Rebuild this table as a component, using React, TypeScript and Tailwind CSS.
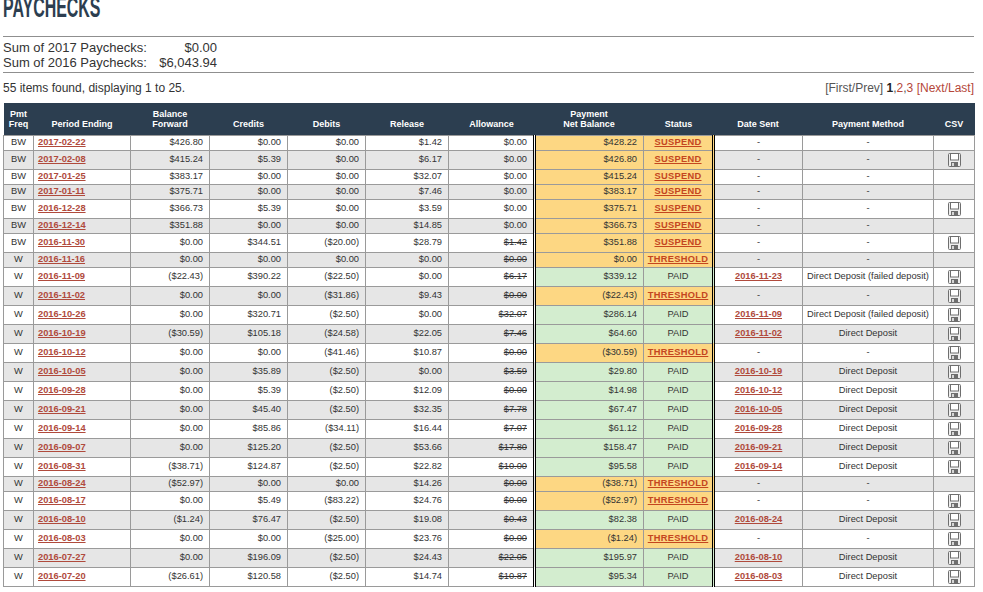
import React from 'react';

type Row = {
  freq: string;
  period: string;
  balance: string;
  credits: string;
  debits: string;
  release: string;
  allowance: string;
  struck: boolean;
  net: string;
  status: 'SUSPEND' | 'THRESHOLD' | 'PAID';
  sent: string;
  method: string;
  csv: boolean;
};

const r = (
  freq: string,
  period: string,
  balance: string,
  credits: string,
  debits: string,
  release: string,
  allowance: string,
  struck: boolean,
  net: string,
  status: Row['status'],
  sent: string,
  method: string,
  csv: boolean
): Row => ({ freq, period, balance, credits, debits, release, allowance, struck, net, status, sent, method, csv });

const DD = 'Direct Deposit';
const DDF = 'Direct Deposit (failed deposit)';

const rows: Row[] = [
  r('BW', '2017-02-22', '$426.80', '$0.00', '$0.00', '$1.42', '$0.00', false, '$428.22', 'SUSPEND', '-', '-', false),
  r('BW', '2017-02-08', '$415.24', '$5.39', '$0.00', '$6.17', '$0.00', false, '$426.80', 'SUSPEND', '-', '-', true),
  r('BW', '2017-01-25', '$383.17', '$0.00', '$0.00', '$32.07', '$0.00', false, '$415.24', 'SUSPEND', '-', '-', false),
  r('BW', '2017-01-11', '$375.71', '$0.00', '$0.00', '$7.46', '$0.00', false, '$383.17', 'SUSPEND', '-', '-', false),
  r('BW', '2016-12-28', '$366.73', '$5.39', '$0.00', '$3.59', '$0.00', false, '$375.71', 'SUSPEND', '-', '-', true),
  r('BW', '2016-12-14', '$351.88', '$0.00', '$0.00', '$14.85', '$0.00', false, '$366.73', 'SUSPEND', '-', '-', false),
  r('BW', '2016-11-30', '$0.00', '$344.51', '($20.00)', '$28.79', '$1.42', true, '$351.88', 'SUSPEND', '-', '-', true),
  r('W', '2016-11-16', '$0.00', '$0.00', '$0.00', '$0.00', '$0.00', true, '$0.00', 'THRESHOLD', '-', '-', false),
  r('W', '2016-11-09', '($22.43)', '$390.22', '($22.50)', '$0.00', '$6.17', true, '$339.12', 'PAID', '2016-11-23', DDF, true),
  r('W', '2016-11-02', '$0.00', '$0.00', '($31.86)', '$9.43', '$0.00', true, '($22.43)', 'THRESHOLD', '-', '-', true),
  r('W', '2016-10-26', '$0.00', '$320.71', '($2.50)', '$0.00', '$32.07', true, '$286.14', 'PAID', '2016-11-09', DDF, true),
  r('W', '2016-10-19', '($30.59)', '$105.18', '($24.58)', '$22.05', '$7.46', true, '$64.60', 'PAID', '2016-11-02', DD, true),
  r('W', '2016-10-12', '$0.00', '$0.00', '($41.46)', '$10.87', '$0.00', true, '($30.59)', 'THRESHOLD', '-', '-', true),
  r('W', '2016-10-05', '$0.00', '$35.89', '($2.50)', '$0.00', '$3.59', true, '$29.80', 'PAID', '2016-10-19', DD, true),
  r('W', '2016-09-28', '$0.00', '$5.39', '($2.50)', '$12.09', '$0.00', true, '$14.98', 'PAID', '2016-10-12', DD, true),
  r('W', '2016-09-21', '$0.00', '$45.40', '($2.50)', '$32.35', '$7.78', true, '$67.47', 'PAID', '2016-10-05', DD, true),
  r('W', '2016-09-14', '$0.00', '$85.86', '($34.11)', '$16.44', '$7.07', true, '$61.12', 'PAID', '2016-09-28', DD, true),
  r('W', '2016-09-07', '$0.00', '$125.20', '($2.50)', '$53.66', '$17.80', true, '$158.47', 'PAID', '2016-09-21', DD, true),
  r('W', '2016-08-31', '($38.71)', '$124.87', '($2.50)', '$22.82', '$10.00', true, '$95.58', 'PAID', '2016-09-14', DD, true),
  r('W', '2016-08-24', '($52.97)', '$0.00', '$0.00', '$14.26', '$0.00', true, '($38.71)', 'THRESHOLD', '-', '-', false),
  r('W', '2016-08-17', '$0.00', '$5.49', '($83.22)', '$24.76', '$0.00', true, '($52.97)', 'THRESHOLD', '-', '-', true),
  r('W', '2016-08-10', '($1.24)', '$76.47', '($2.50)', '$19.08', '$0.43', true, '$82.38', 'PAID', '2016-08-24', DD, true),
  r('W', '2016-08-03', '$0.00', '$0.00', '($25.00)', '$23.76', '$0.00', true, '($1.24)', 'THRESHOLD', '-', '-', true),
  r('W', '2016-07-27', '$0.00', '$196.09', '($2.50)', '$24.43', '$22.05', true, '$195.97', 'PAID', '2016-08-10', DD, true),
  r('W', '2016-07-20', '($26.61)', '$120.58', '($2.50)', '$14.74', '$10.87', true, '$95.34', 'PAID', '2016-08-03', DD, true),
];

function Floppy() {
  return (
    <svg width="13" height="14" viewBox="0 0 13 14" className="inline-block align-middle">
      <rect x="0.5" y="0.5" width="12" height="13" rx="1" fill="#eeeeee" stroke="#6e6e6e" />
      <rect x="2.5" y="0.5" width="8" height="6.5" fill="#ffffff" stroke="#6e6e6e" />
      <rect x="3" y="9" width="7" height="5" fill="#6e6e6e" />
      <rect x="4" y="10" width="2" height="3" fill="#d6d6d6" />
    </svg>
  );
}

const td = 'border border-[#9a9a9a] p-0 align-middle';
const num = `${td} text-right pr-[6px]`;

export default function App() {
  return (
    <div className="w-[971px] ml-[3px] text-[#333] font-['Liberation_Sans',Arial,sans-serif]">
      <div className="flex h-[37px] border-b border-[#8f8f8f]">
        <h1 className="-mt-[7px] h-[28px] leading-[28px] text-[29px] font-bold text-[#2c3e50] origin-left scale-x-[0.55] whitespace-nowrap">
          PAYCHECKS
        </h1>
      </div>

      <div className="pt-[3px] pb-[2px] border-b border-[#8f8f8f] text-[13px] leading-[15px]">
        <div className="grid grid-cols-[150px_64px] w-[214px]">
          <span>Sum of 2017 Paychecks:</span>
          <span className="text-right">$0.00</span>
          <span>Sum of 2016 Paychecks:</span>
          <span className="text-right">$6,043.94</span>
        </div>
      </div>

      <div className="pt-[8px] pb-[7px] flex justify-between text-[12px] leading-[15px]">
        <span>55 items found, displaying 1 to 25.</span>
        <span className="text-[#555]">
          [First/Prev] <b className="text-[#222]">1</b>,<span className="text-[#b5473a]">2</span>,
          <span className="text-[#b5473a]">3</span> <span className="text-[#b5473a]">[Next/Last]</span>
        </span>
      </div>

      <table className="w-[971px] table-fixed border-collapse text-[9.3px]">
        <colgroup>
          <col className="w-[30px]" />
          <col className="w-[97px]" />
          <col className="w-[79px]" />
          <col className="w-[78px]" />
          <col className="w-[78px]" />
          <col className="w-[83px]" />
          <col className="w-[86px]" />
          <col className="w-[109px]" />
          <col className="w-[70px]" />
          <col className="w-[89px]" />
          <col className="w-[131px]" />
          <col className="w-[41px]" />
        </colgroup>
        <thead>
          <tr className="h-[32px] bg-[#2c3e50] text-white text-[9px] font-bold leading-[10px]">
            <th className="align-bottom pb-[6px] font-bold">Pmt<br />Freq</th>
            <th className="align-bottom pb-[6px] font-bold">Period Ending</th>
            <th className="align-bottom pb-[6px] font-bold">Balance<br />Forward</th>
            <th className="align-bottom pb-[6px] font-bold">Credits</th>
            <th className="align-bottom pb-[6px] font-bold">Debits</th>
            <th className="align-bottom pb-[6px] font-bold">Release</th>
            <th className="align-bottom pb-[6px] font-bold">Allowance</th>
            <th className="align-bottom pb-[6px] font-bold">Payment<br />Net Balance</th>
            <th className="align-bottom pb-[6px] font-bold">Status</th>
            <th className="align-bottom pb-[6px] font-bold">Date Sent</th>
            <th className="align-bottom pb-[6px] font-bold">Payment Method</th>
            <th className="align-bottom pb-[6px] font-bold">CSV</th>
          </tr>
        </thead>
        <tbody className="leading-[11px]">
          {rows.map((row, i) => {
            const paid = row.status === 'PAID';
            const hl = paid ? 'bg-[#d3edcf]' : 'bg-[#fdd783]';
            return (
              <tr key={row.period} className={`${row.csv ? 'h-[19px]' : 'h-[15px]'} ${i % 2 ? 'bg-[#e6e6e6]' : 'bg-white'}`}>
                <td className={`${td} text-center`}>{row.freq}</td>
                <td className={`${td} pl-[4px]`}>
                  <a className="font-bold underline text-[#b04a3c]">{row.period}</a>
                </td>
                <td className={num}>{row.balance}</td>
                <td className={num}>{row.credits}</td>
                <td className={num}>{row.debits}</td>
                <td className={num}>{row.release}</td>
                <td className={num}>
                  <span className={row.struck ? 'line-through' : ''}>{row.allowance}</span>
                </td>
                <td className={`${num} ${hl} border-l-[3px] border-l-black border-double`}>{row.net}</td>
                <td className={`${td} text-center ${hl}`}>
                  {paid ? (
                    'PAID'
                  ) : (
                    <a className="font-bold underline text-[#c4461f] tracking-[0.3px]">{row.status}</a>
                  )}
                </td>
                <td className={`${td} text-center border-l-[3px] border-l-black border-double`}>
                  {row.sent === '-' ? '-' : <a className="font-bold underline text-[#b04a3c]">{row.sent}</a>}
                </td>
                <td className={`${td} text-center`}>{row.method}</td>
                <td className={`${td} text-center`}>{row.csv ? <Floppy /> : null}</td>
              </tr>
            );
          })}
        </tbody>
      </table>
    </div>
  );
}
